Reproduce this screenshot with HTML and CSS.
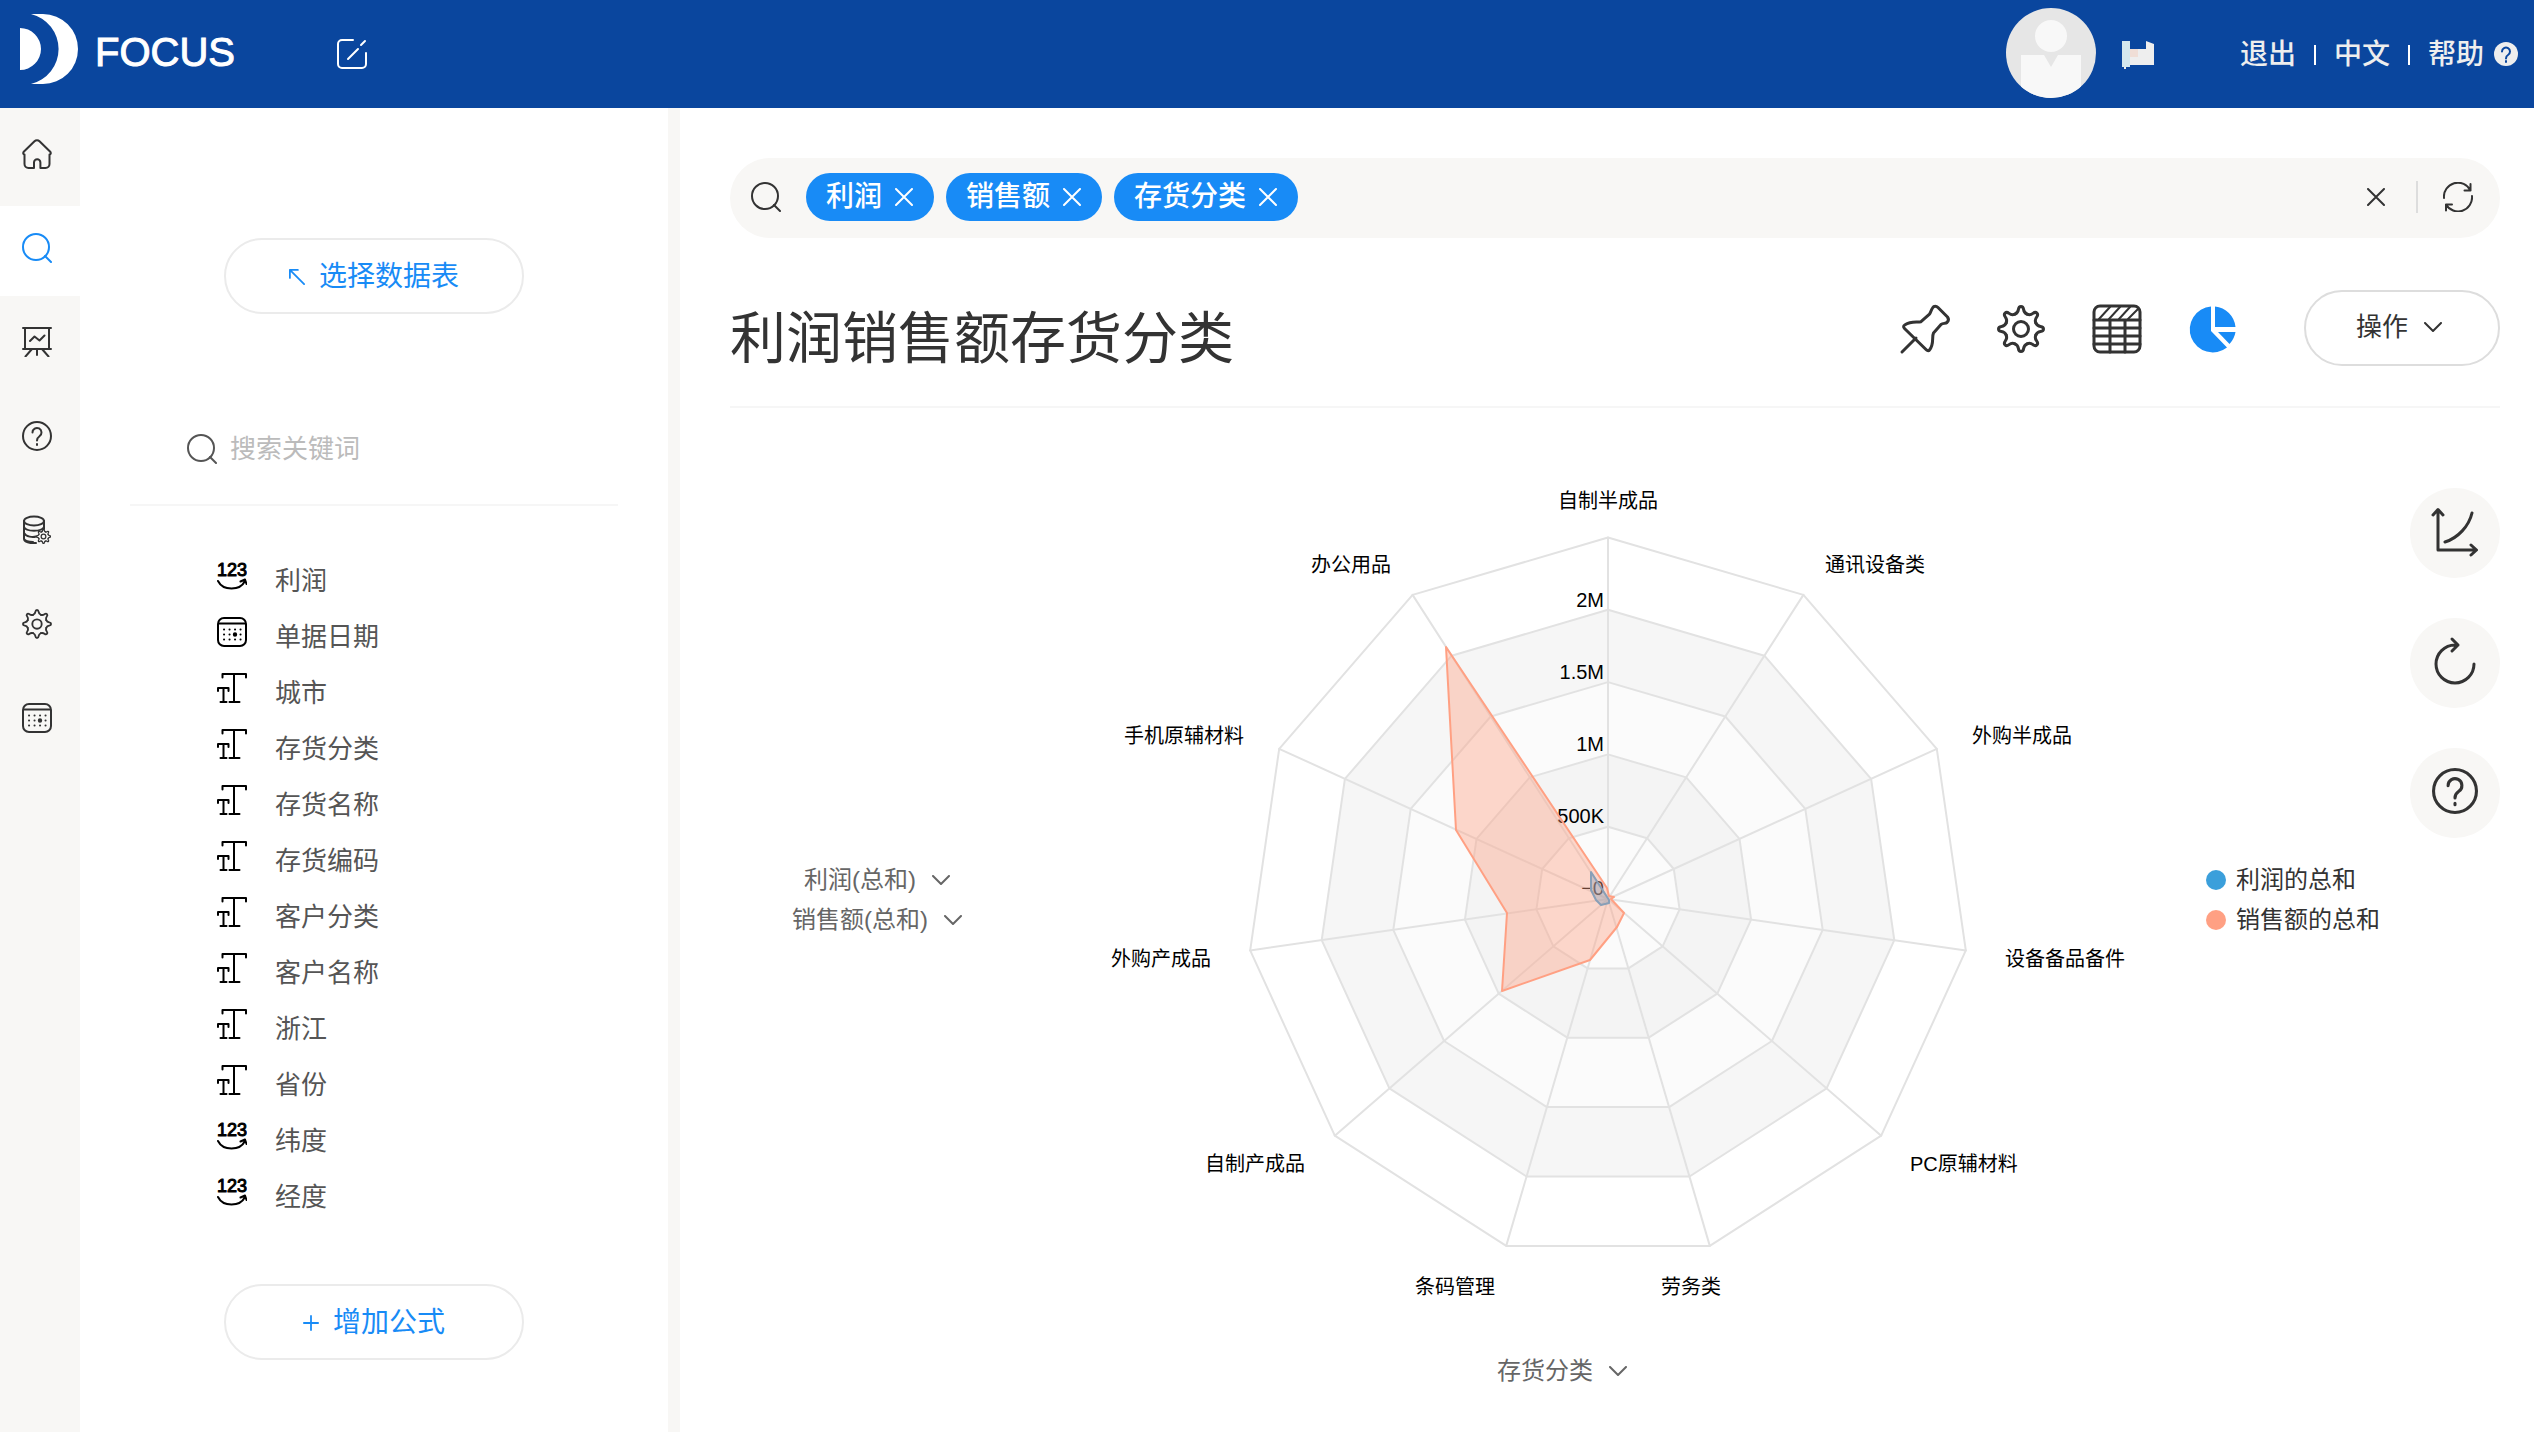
FILE: index.html
```html
<!DOCTYPE html>
<html lang="zh-CN">
<head>
<meta charset="utf-8">
<meta name="viewport" content="width=device-width, initial-scale=1">
<title>FOCUS</title>
<link rel="stylesheet" href="styles.css">
</head>
<body>
<svg class="sprite" aria-hidden="true">
  <defs><path id="tooth" d="M17.900 9.200C20.200 8.200 21 7.500 21.400 4.500 21.700 2.200 22.500 1.500 24 1.500S26.300 2.200 26.600 4.500C27 7.500 27.800 8.200 30.100 9.200"/></defs>
  <symbol id="i-search" viewBox="0 0 30 30"><circle cx="14" cy="14" r="13"/><path d="M23 23l6 6"/></symbol>
  <symbol id="i-help" viewBox="0 0 30 30"><circle cx="15" cy="15" r="14"/><path d="M10.500 11.500a4.500 4.500 0 1 1 7 3.700c-1.700 1.200-2.500 2-2.500 4.300M15 23v1"/></symbol>
  <symbol id="i-gear" viewBox="0 0 48 48"><circle cx="24" cy="24" r="7.500"/><use href="#tooth"/><use href="#tooth" transform="rotate(45 24 24)"/><use href="#tooth" transform="rotate(90 24 24)"/><use href="#tooth" transform="rotate(135 24 24)"/><use href="#tooth" transform="rotate(180 24 24)"/><use href="#tooth" transform="rotate(225 24 24)"/><use href="#tooth" transform="rotate(270 24 24)"/><use href="#tooth" transform="rotate(315 24 24)"/></symbol>
  <symbol id="i-cal" viewBox="0 0 30 30"><rect x="1" y="1" width="28" height="28" rx="6"/><path d="M2 6.500h26"/><path class="dots" d="M7 12.500h.1M12.500 12.500h.1M18 12.500h.1M23.500 12.500h.1M7 17.500h.1M12.500 17.500h.1M23.500 17.500h.1M7 22.500h.1M12.500 22.500h.1M18 22.500h.1M23.500 22.500h.1"/><circle class="solid" cx="18" cy="17.500" r="1.200"/></symbol>
  <symbol id="i-text" viewBox="0 0 30 30"><path d="M5.500 4.500V1h23.500v3.500M17 1v28M12.500 29h10M1 18v-3h10.500v3M6.500 15v14M3.500 29h6"/></symbol>
  <symbol id="i-num" viewBox="0 0 30 30"><text x="0" y="15">123</text><path d="M1 20c5 10 22 10 27 0M23.500 20.500l4.500-2 1.500 4.500"/></symbol>
  <symbol id="i-chev" viewBox="0 0 18 10"><path d="M1 1l8 8 8-8"/></symbol>
  <symbol id="i-x" viewBox="0 0 18 18"><path d="M1 1l16 16M17 1L1 17"/></symbol>
</svg>

<header class="topbar">
  <a class="brand" href="#">
    <svg class="brand-mark" viewBox="0 0 58 70" aria-hidden="true"><path d="M0 14a21 21 0 0 1 0 42zM11 0h12a35 35 0 0 1 0 70H11A36 36 0 0 0 11 0z"/></svg>
    <span>FOCUS</span>
  </a>
  <button class="icon-btn edit" aria-label="编辑"><svg class="ico-30" viewBox="0 0 30 30"><path d="M16 1H5a4 4 0 0 0-4 4v20a4 4 0 0 0 4 4h20a4 4 0 0 0 4-4V14M11 20L21 10M24 6l4-4"/></svg></button>
  <div class="account">
    <svg class="avatar" viewBox="0 0 90 90" aria-hidden="true"><clipPath id="av"><circle cx="45" cy="45" r="45"/></clipPath><g clip-path="url(#av)"><path fill="#e6e6e6" d="M0 0h90v90H0z"/><circle cx="45" cy="28" r="16" fill="#f8f8f8"/><path fill="#f8f8f8" d="M15 47h23l7 12 7-12h23v43H15z"/></g></svg>
    <svg class="flag" viewBox="0 0 32 28" aria-hidden="true"><path fill="#eee" d="M0 0h8v8h16V0l8 3v21H8v2H4v2H2v-2H0z"/><path fill="#d4e8ee" d="M0 0h8v26H0z"/><path fill="#f0ded6" d="M8 8h8v8H8z"/></svg>
    <nav class="links"><a href="#">退出</a><a href="#">中文</a><a href="#">帮助</a></nav>
    <svg class="help-dot" viewBox="0 0 24 24" aria-hidden="true"><circle cx="12" cy="12" r="12"/><path d="M8 9.500a4 4 0 1 1 6 3.500c-1.500.9-2 1.600-2 3.500M12 19v1"/></svg>
  </div>
</header>

<div class="shell">
  <nav class="rail">
    <a href="#" aria-label="首页"><svg class="ico-30" viewBox="0 0 30 30"><path d="M12.500 2.200L2 12.500c-1.500 1.500-.5 3 .5 3V25a4 4 0 0 0 4 4H12v-5.500a3.200 3.200 0 0 1 6.400 0V29h5.100a4 4 0 0 0 4-4v-9.500c1 0 2-1.500.5-3L17.500 2.200a3.500 3.500 0 0 0-5 0z"/></svg></a>
    <a href="#" class="active" aria-label="搜索"><svg class="ico-30"><use href="#i-search"/></svg></a>
    <a href="#" aria-label="看板"><svg class="ico-30" viewBox="0 0 30 30"><path d="M1 1h28M3 1v21M27 1v21M1 22h28M8 14l4.500-4.500 5 4 5-5M10 22l-6.500 7.500M20 22l6.500 7.500M15 22v6"/></svg></a>
    <a href="#" aria-label="帮助"><svg class="ico-30"><use href="#i-help"/></svg></a>
    <a href="#" aria-label="数据"><svg class="ico-30 fine" viewBox="0 0 30 30"><ellipse cx="12" cy="6" rx="10" ry="4.500"/><path d="M2 6v18c0 3 6 4.500 12 4M22 6v8M2 12c2 5 18 5 20 0M2 18c2 4 9 4.500 12 3.500M2 24c1 2 5 3 9 3"/><svg x="14" y="14" width="15" height="15"><use href="#i-gear" class="gear-xs"/></svg></svg></a>
    <a href="#" aria-label="设置"><svg class="ico-30 gear-sm"><use href="#i-gear"/></svg></a>
    <a href="#" aria-label="日历"><svg class="ico-30"><use href="#i-cal"/></svg></a>
  </nav>

  <aside class="fields">
    <button class="pill"><svg viewBox="0 0 18 18"><path d="M17 17L1 1M1 10V1h9"/></svg>选择数据表</button>
    <label class="find"><svg class="ico-30"><use href="#i-search"/></svg><input type="text" placeholder="搜索关键词" aria-label="搜索关键词"></label>
    <ul class="field-list">
      <li><svg><use href="#i-num"/></svg>利润</li>
      <li><svg><use href="#i-cal"/></svg>单据日期</li>
      <li><svg><use href="#i-text"/></svg>城市</li>
      <li><svg><use href="#i-text"/></svg>存货分类</li>
      <li><svg><use href="#i-text"/></svg>存货名称</li>
      <li><svg><use href="#i-text"/></svg>存货编码</li>
      <li><svg><use href="#i-text"/></svg>客户分类</li>
      <li><svg><use href="#i-text"/></svg>客户名称</li>
      <li><svg><use href="#i-text"/></svg>浙江</li>
      <li><svg><use href="#i-text"/></svg>省份</li>
      <li><svg><use href="#i-num"/></svg>纬度</li>
      <li><svg><use href="#i-num"/></svg>经度</li>
    </ul>
    <button class="pill"><svg viewBox="0 0 18 18"><path d="M9 1v16M1 9h16"/></svg>增加公式</button>
  </aside>

  <main class="board">
    <div class="query">
      <svg class="ico-30"><use href="#i-search"/></svg>
      <div class="chips">
        <span class="chip">利润<button aria-label="移除利润"><svg><use href="#i-x"/></svg></button></span>
        <span class="chip">销售额<button aria-label="移除销售额"><svg><use href="#i-x"/></svg></button></span>
        <span class="chip">存货分类<button aria-label="移除存货分类"><svg><use href="#i-x"/></svg></button></span>
      </div>
      <button class="icon-btn clear" aria-label="清空"><svg><use href="#i-x"/></svg></button>
      <button class="icon-btn refresh" aria-label="刷新"><svg class="ico-30" viewBox="0 0 30 30"><path d="M1 16A14 14 0 0 1 27.500 8.500M29 14A14 14 0 0 1 3 22.500M27.500 2v6.500h-6M3 28.500V22.500h6"/></svg></button>
    </div>

    <div class="heading">
      <h1>利润销售额存货分类</h1>
      <div class="tools">
        <button class="icon-btn" aria-label="固定"><svg viewBox="0 0 48 48"><path d="M1 47l14-14M31.500 3c1.500-2.500 4-2 5.500-.5l9.500 9.500c1.500 2 1 4-.5 5.500-1.500 1.200-4 .5-6 2l-7.500 8.500c-2 4 1 11-4 17-1 1.200-2.500.5-3.500-.5L3.500 23.500c-1.500-1.500-1-3 .5-3.800 6-3.700 12-2 16-3l8.500-7.500c1.500-2 1.500-4 3-6.200z"/></svg></button>
        <button class="icon-btn" aria-label="设置"><svg><use href="#i-gear"/></svg></button>
        <button class="icon-btn" aria-label="表格"><svg viewBox="0 0 48 48"><rect x="1" y="1" width="46" height="46" rx="6"/><path d="M1 15h46M1 23h46M1 31h46M1 39h46M17 15v32M32 15v32"/><path stroke-width="2" d="M6 14L17 2M16 14L27 2M26 14L37 2M35 14L45 4"/></svg></button>
        <button class="icon-btn on" aria-label="图表"><svg viewBox="0 0 48 48"><path d="M22 1.500V26l16 16.500A23 23 0 1 1 22 1.500zM26 1.500A23 23 0 0 1 46.500 22H26zM29 27H46.500a23 23 0 0 1-6 12z"/></svg></button>
        <button class="action">操作<svg><use href="#i-chev"/></svg></button>
      </div>
    </div>

    <section class="viz">
      <div class="measures">
        <label class="pick"><select aria-label="利润"><option>利润(总和)</option></select><svg><use href="#i-chev"/></svg></label>
        <label class="pick"><select aria-label="销售额"><option>销售额(总和)</option></select><svg><use href="#i-chev"/></svg></label>
      </div>
      <svg class="radar" viewBox="0 0 1168 922" role="img" aria-label="利润销售额存货分类">
        <g id="grid"></g>
        <g class="ticks">
          <text x="580" y="199">2M</text><text x="580" y="271">1.5M</text><text x="580" y="343">1M</text><text x="580" y="415">500K</text><text x="580" y="487">−0</text>
        </g>
        <polygon class="s-profit" points="567,464 567,482 572,492 577,497 585,495 585,492"/>
        <polygon class="s-sales" points="422,239 432,422 483,505 478,583 566,552 593,519 600,505 587,491 590,489 585,488 583,480"/>
        <g class="cats">
          <text class="mid" x="584" y="100">自制半成品</text>
          <text x="801" y="164">通讯设备类</text>
          <text x="948" y="335">外购半成品</text>
          <text x="981" y="558">设备备品备件</text>
          <text x="886" y="763">PC原辅材料</text>
          <text x="637" y="886">劳务类</text>
          <text class="end" x="471" y="886">条码管理</text>
          <text class="end" x="281" y="763">自制产成品</text>
          <text class="end" x="187" y="558">外购产成品</text>
          <text class="end" x="220" y="335">手机原辅材料</text>
          <text class="end" x="367" y="164">办公用品</text>
        </g>
      </svg>
      <ul class="legend"><li class="profit">利润的总和</li><li class="sales">销售额的总和</li></ul>
      <div class="side">
        <button aria-label="坐标轴"><svg viewBox="0 0 46 46"><path d="M6 42V2M1 7l5-5.500L11 7M6 42h38M39 37l5.500 5-5.500 5M13 34C26 30 37 18 40 5"/></svg></button>
        <button aria-label="重置"><svg viewBox="0 0 46 46"><path d="M42 26A19 19 0 1 1 23 7h3M20 1l6 6-6 6"/></svg></button>
        <button aria-label="帮助"><svg viewBox="0 0 30 30" class="thin"><use href="#i-help"/></svg></button>
      </div>
      <div class="dimension">
        <label class="pick"><select aria-label="分类"><option>存货分类</option></select><svg><use href="#i-chev"/></svg></label>
      </div>
    </section>
  </main>
</div>
<script src="radar.js"></script>
</body>
</html>
```
FILE: radar.js
```js
// Draws the rings and spokes of the radar grid.
(function () {
  var cx = 584, cy = 491, axes = 11, step = 72.3, rings = 5;
  var fills = ['#fbfbfb', '#f4f4f4', '#fbfbfb', '#f6f6f6', '#ffffff'];
  var ns = 'http://www.w3.org/2000/svg';
  var grid = document.getElementById('grid');
  function point(i, r) {
    var a = i * 2 * Math.PI / axes;
    return (cx + r * Math.sin(a)).toFixed(1) + ',' + (cy - r * Math.cos(a)).toFixed(1);
  }
  function add(name, attrs) {
    var el = document.createElementNS(ns, name);
    for (var k in attrs) el.setAttribute(k, attrs[k]);
    grid.appendChild(el);
  }
  for (var n = rings; n > 0; n--) {
    var pts = [];
    for (var i = 0; i < axes; i++) pts.push(point(i, n * step));
    add('polygon', { points: pts.join(' '), fill: fills[n - 1] });
  }
  for (var j = 0; j < axes; j++) {
    add('path', { d: 'M' + cx + ',' + cy + 'L' + point(j, rings * step) });
  }
})();
```
FILE: styles.css
```css
* { box-sizing: border-box; }
body {
  margin: 0;
  min-height: 100vh;
  display: flex;
  flex-direction: column;
  background: #fff;
  color: #333;
  font: 26px/36px "Liberation Sans", "Noto Sans CJK SC", sans-serif;
}
button, input, select { font: inherit; color: inherit; background: none; border: 0; padding: 0; margin: 0; }
button { cursor: pointer; }
a { color: inherit; text-decoration: none; }
ul { list-style: none; margin: 0; padding: 0; }
svg { fill: none; stroke: currentColor; stroke-width: 2; stroke-linecap: round; stroke-linejoin: round; flex: none; display: block; }
.sprite { display: none; }
.solid { fill: currentColor; }
.ico-30 { width: 30px; height: 30px; }
.icon-btn { display: flex; align-items: center; justify-content: center; }

.topbar { height: 108px; padding: 0 16px 2px 20px; display: flex; align-items: center; background: #0a469e; color: #fff; }
.brand { display: flex; align-items: center; gap: 17px; padding-bottom: 8px; font-size: 40px; line-height: 40px; -webkit-text-stroke: 1px #fff; }
.brand span { padding-top: 6px; }
.brand-mark { width: 58px; height: 70px; fill: #fff; stroke: none; }
.edit { margin-left: 102px; padding-top: 2px; }
.account { margin-left: auto; display: flex; align-items: center; color: #eee; }
.avatar { width: 90px; height: 90px; stroke: none; }
.flag { width: 32px; height: 28px; margin: 4px 86px 0 26px; stroke: none; }
.links { display: flex; align-items: center; padding-top: 4px; font-size: 28px; font-weight: 500; }
.links a + a { margin-left: 18px; padding-left: 20px; background: linear-gradient(#fff, #fff) left center / 2px 20px no-repeat; }
.help-dot { width: 24px; height: 24px; margin: 2px 0 0 10px; fill: #eee; stroke: none; }
.help-dot path { fill: none; stroke: #0a469e; }

.shell { flex: 1; display: flex; }
.rail { width: 80px; background: #f8f7f5; }
.rail a { height: 94px; padding: 0 0 2px 22px; display: flex; align-items: center; }
.rail .active { height: 90px; margin-top: 4px; padding-bottom: 6px; background: #fff; color: #188bf6; }
.gear-sm { stroke-width: 3; }
.gear-xs { stroke-width: 4; }
.dots { stroke-width: 2; }

.fields { width: 600px; padding: 130px 50px 0; border-right: 12px solid #f8f7f5; display: flex; flex-direction: column; align-items: center; }
.pill { width: 300px; height: 76px; padding-top: 2px; border: 2px solid #ebebeb; border-radius: 38px; color: #188bf6; font-size: 28px; display: flex; align-items: center; justify-content: center; gap: 14px; }
.pill svg { width: 16px; height: 16px; }
.find { width: 100%; height: 114px; margin-top: 78px; padding: 2px 0 0 57px; border-bottom: 2px solid #f6f6f6; display: flex; align-items: center; gap: 13px; color: #555; }
.find input { flex: 1; min-width: 0; height: 36px; outline: 0; }
.find input::placeholder { color: #bbb; opacity: 1; }
.field-list { width: 100%; padding: 47px 0 59px 87px; }
.field-list li { height: 56px; display: flex; align-items: center; gap: 28px; color: #555; }
.field-list svg { width: 30px; height: 30px; margin-bottom: 10px; color: #000; }
symbol text { font: 18px "Liberation Sans", sans-serif; fill: #000; stroke: #000; stroke-width: 1px; }

.board { flex: 1; min-width: 0; padding: 50px 34px 0 50px; }
.query { height: 80px; padding: 0 27px 2px 21px; border-radius: 40px; background: #f8f7f5; display: flex; align-items: center; }
.chips { flex: 1; display: flex; gap: 12px; margin: 0 25px; }
.chip { height: 48px; padding: 0 21px 0 20px; border-radius: 24px; background: #188bf6; color: #fff; font-size: 28px; font-weight: 500; display: flex; align-items: center; gap: 13px; }
.chip svg, .clear svg { width: 18px; height: 18px; }
.refresh { height: 32px; margin-left: 31px; padding-left: 25px; border-left: 2px solid #ddd; }

.heading { height: 170px; border-bottom: 2px solid #f6f6f6; display: flex; justify-content: space-between; }
h1 { margin: 61px 0 0; font-size: 56px; line-height: 80px; font-weight: 400; }
.tools { display: flex; align-items: flex-start; gap: 48px; padding-top: 52px; }
.tools .icon-btn { height: 78px; }
.tools .icon-btn svg { width: 48px; height: 48px; stroke-width: 3; overflow: visible; }
.tools .on svg { fill: #188bf6; stroke: none; }
.action { width: 196px; height: 76px; margin-left: 19px; padding: 0 6px 2px 0; border: 2px solid #ddd; border-radius: 38px; display: flex; align-items: center; justify-content: center; gap: 16px; }
.action svg, .pick svg { width: 18px; height: 10px; }

.viz { display: grid; grid-template-columns: 294px 1fr 218px 90px; font-size: 24px; line-height: 40px; }
.measures { align-self: center; padding-top: 62px; display: flex; flex-direction: column; align-items: center; color: #666; }
.pick { display: grid; align-items: center; }
.pick > * { grid-area: 1 / 1; }
.pick select { appearance: none; height: 40px; padding-right: 34px; color: #666; }
.pick svg { justify-self: end; pointer-events: none; color: #666; }
.radar { width: 100%; height: auto; font-size: 20px; }
.radar text { fill: #000; stroke: none; }
#grid { stroke: #e2e2e2; }
.ticks, .end { text-anchor: end; }
.mid { text-anchor: middle; }
.s-profit { fill: #3b9fdb; fill-opacity: .4; stroke: #3b9fdb; }
.s-sales { fill: #ffa083; fill-opacity: .4; stroke: #ffa083; }
.legend { align-self: center; padding: 62px 0 0 14px; }
.legend li { display: flex; align-items: center; gap: 10px; }
.legend li::before { content: ""; width: 20px; height: 20px; border-radius: 50%; background: #3b9fdb; }
.legend .sales::before { background: #ffa083; }
.side { padding-top: 80px; display: flex; flex-direction: column; gap: 40px; }
.side button { width: 90px; height: 90px; border-radius: 50%; background: #f8f7f5; display: flex; align-items: center; justify-content: center; padding-bottom: 4px; }
.side svg { width: 46px; height: 46px; stroke-width: 3; overflow: visible; }
.side .thin { stroke-width: 2; }
.dimension { grid-column: 1 / 4; padding: 21px 16px 19px 0; display: flex; justify-content: center; }
```
